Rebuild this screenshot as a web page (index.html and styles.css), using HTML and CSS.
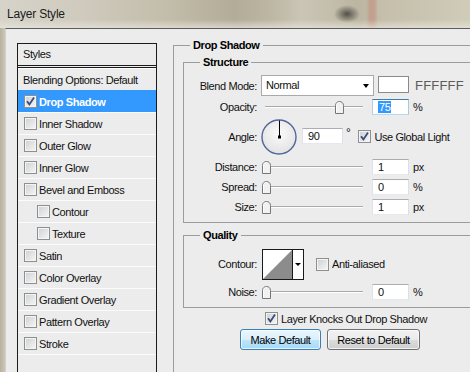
FILE: index.html
```html
<!DOCTYPE html>
<html>
<head>
<meta charset="utf-8">
<title>Layer Style</title>
<link rel="stylesheet" href="styles.css">
</head>
<body>
<div class="window">
  <div class="titlebar"><span class="title">Layer Style</span></div>
  <div class="frame">
    <div class="frame-edge"></div>
    <div class="client">
      <div class="styles-panel">
        <div class="styles-head">Styles</div>
        <ul class="style-list">
          <li class="style-item plain">Blending Options: Default</li>
          <li class="style-item selected"><span class="cb"><svg width="11" height="11" viewBox="0 0 11 11"><path d="M2 5.2L4.4 8.4L9 1.6" fill="none" stroke="#3b4c7a" stroke-width="1.8"/></svg></span>Drop Shadow</li>
          <li class="style-item"><span class="cb"></span>Inner Shadow</li>
          <li class="style-item"><span class="cb"></span>Outer Glow</li>
          <li class="style-item"><span class="cb"></span>Inner Glow</li>
          <li class="style-item"><span class="cb"></span>Bevel and Emboss</li>
          <li class="style-item sub"><span class="cb"></span>Contour</li>
          <li class="style-item sub"><span class="cb"></span>Texture</li>
          <li class="style-item"><span class="cb"></span>Satin</li>
          <li class="style-item"><span class="cb"></span>Color Overlay</li>
          <li class="style-item"><span class="cb"></span>Gradient Overlay</li>
          <li class="style-item"><span class="cb"></span>Pattern Overlay</li>
          <li class="style-item"><span class="cb"></span>Stroke</li>
        </ul>
      </div>

      <fieldset class="group outer">
        <legend>Drop Shadow</legend>

        <fieldset class="group inner structure">
          <legend>Structure</legend>

          <div class="row row-blend">
            <span class="label">Blend Mode:</span>
            <span class="select">Normal<span class="sel-arrow"></span></span>
            <span class="swatch"></span>
            <span class="hex">FFFFFF</span>
          </div>

          <div class="row row-slider row-opacity">
            <span class="label">Opacity:</span>
            <span class="slider"><span class="track"></span><span class="thumb" style="left: calc(75% - 4px)"><svg width="9" height="13" viewBox="0 0 9 13"><path d="M0.5 12.5V4.5C0.5 2 2.3 0.5 4.5 0.5S8.5 2 8.5 4.5V12.5Z" fill="#f1f1f1" stroke="#777"/><path d="M1.5 11.5V4.6C1.5 2.8 2.8 1.5 4.5 1.5" fill="none" stroke="#fff"/></svg></span></span>
            <span class="field focused"><span class="hl">75</span></span>
            <span class="unit">%</span>
          </div>

          <div class="row row-angle">
            <span class="label">Angle:</span>
            <span class="dial"><svg width="36" height="36" viewBox="0 0 36 36"><defs><radialGradient id="dialfill" cx="50%" cy="40%" r="60%"><stop offset="0" stop-color="#fbfbfb"/><stop offset="1" stop-color="#e2e2e2"/></radialGradient></defs><circle cx="18" cy="18" r="17" fill="url(#dialfill)" stroke="#51679a" stroke-width="1.4"/><line x1="18.5" y1="1.5" x2="18.5" y2="18" stroke="#000" stroke-width="1"/><rect x="17" y="16.5" width="3" height="3" fill="#000"/></svg></span>
            <span class="field angle-field">90</span>
            <span class="deg">°</span>
            <span class="cb angle-cb"><svg width="11" height="11" viewBox="0 0 11 11"><path d="M2 5.2L4.4 8.4L9 1.6" fill="none" stroke="#3b4c7a" stroke-width="1.8"/></svg></span>
            <span class="cb-text">Use Global Light</span>
          </div>

          <div class="row row-slider">
            <span class="label">Distance:</span>
            <span class="slider"><span class="track"></span><span class="thumb" style="left: calc(0% - 3px)"><svg width="9" height="13" viewBox="0 0 9 13"><path d="M0.5 12.5V4.5C0.5 2 2.3 0.5 4.5 0.5S8.5 2 8.5 4.5V12.5Z" fill="#f1f1f1" stroke="#777"/><path d="M1.5 11.5V4.6C1.5 2.8 2.8 1.5 4.5 1.5" fill="none" stroke="#fff"/></svg></span></span>
            <span class="field">1</span>
            <span class="unit">px</span>
          </div>

          <div class="row row-slider">
            <span class="label">Spread:</span>
            <span class="slider"><span class="track"></span><span class="thumb" style="left: calc(0% - 3px)"><svg width="9" height="13" viewBox="0 0 9 13"><path d="M0.5 12.5V4.5C0.5 2 2.3 0.5 4.5 0.5S8.5 2 8.5 4.5V12.5Z" fill="#f1f1f1" stroke="#777"/><path d="M1.5 11.5V4.6C1.5 2.8 2.8 1.5 4.5 1.5" fill="none" stroke="#fff"/></svg></span></span>
            <span class="field">0</span>
            <span class="unit">%</span>
          </div>

          <div class="row row-slider">
            <span class="label">Size:</span>
            <span class="slider"><span class="track"></span><span class="thumb" style="left: calc(0% - 3px)"><svg width="9" height="13" viewBox="0 0 9 13"><path d="M0.5 12.5V4.5C0.5 2 2.3 0.5 4.5 0.5S8.5 2 8.5 4.5V12.5Z" fill="#f1f1f1" stroke="#777"/><path d="M1.5 11.5V4.6C1.5 2.8 2.8 1.5 4.5 1.5" fill="none" stroke="#fff"/></svg></span></span>
            <span class="field">1</span>
            <span class="unit">px</span>
          </div>
        </fieldset>

        <fieldset class="group inner quality">
          <legend>Quality</legend>

          <div class="row row-contour">
            <span class="label">Contour:</span>
            <span class="contour">
              <svg class="contour-preview" width="29" height="29" viewBox="0 0 29 29"><rect width="29" height="29" fill="#fff"/><polygon points="0,29 29,0 29,29" fill="#8c8c8c"/></svg>
              <span class="contour-drop"><span class="tri"></span></span>
            </span>
            <span class="cb anti-cb"></span>
            <span class="cb-text">Anti-aliased</span>
          </div>

          <div class="row row-slider row-noise">
            <span class="label">Noise:</span>
            <span class="slider"><span class="track"></span><span class="thumb" style="left: calc(0% - 3px)"><svg width="9" height="13" viewBox="0 0 9 13"><path d="M0.5 12.5V4.5C0.5 2 2.3 0.5 4.5 0.5S8.5 2 8.5 4.5V12.5Z" fill="#f1f1f1" stroke="#777"/><path d="M1.5 11.5V4.6C1.5 2.8 2.8 1.5 4.5 1.5" fill="none" stroke="#fff"/></svg></span></span>
            <span class="field">0</span>
            <span class="unit">%</span>
          </div>
        </fieldset>

        <div class="knock">
          <span class="cb"><svg width="11" height="11" viewBox="0 0 11 11"><path d="M2 5.2L4.4 8.4L9 1.6" fill="none" stroke="#3b4c7a" stroke-width="1.8"/></svg></span>
          <span class="cb-text">Layer Knocks Out Drop Shadow</span>
        </div>

        <div class="buttons">
          <button class="btn btn-default" type="button">Make Default</button>
          <button class="btn" type="button">Reset to Default</button>
        </div>
      </fieldset>
    </div>
  </div>
</div>
</body>
</html>
```

FILE: styles.css
```css
* { box-sizing: border-box; }

html, body {
  margin: 0;
  padding: 0;
}

body {
  width: 470px;
  height: 372px;
  overflow: hidden;
  background: #ececec;
  font-family: "Liberation Sans", Arial, sans-serif;
  font-size: 11px;
  letter-spacing: -0.4px;
  color: #111;
}

.window {
  display: flex;
  flex-direction: column;
  height: 372px;
}

/* ---------- title bar ---------- */
.titlebar {
  height: 28px;
  flex: none;
  display: flex;
  align-items: center;
  padding-left: 7px;
  background:
    linear-gradient(to bottom, rgba(255,255,255,0) 70%, rgba(232,229,220,0.7) 100%),
    radial-gradient(ellipse 13px 9px at 347px 14px, rgba(70,68,62,0.9), rgba(90,88,80,0) 100%),
    linear-gradient(90deg, rgba(0,0,0,0) 366px, rgba(196,138,124,0.55) 370px, rgba(196,138,124,0.55) 374px, rgba(0,0,0,0) 378px),
    linear-gradient(90deg, #d6d3c9 0%, #cfcabd 18%, #c3bdab 35%, #b2ac98 50%, #bdb7a4 58%, #cac5b5 64%, #c4bead 70%, #bbb5a2 76%, #c5bfac 82%, #cbc6b3 92%, #d0ccba 100%);
}

.title {
  font-size: 12px;
  letter-spacing: -0.2px;
  color: #1c1c1c;
}

/* ---------- frame ---------- */
.frame {
  flex: 1;
  display: flex;
  min-height: 0;
}

.frame-edge {
  width: 5px;
  flex: none;
  background: linear-gradient(90deg, #b7b19e, #cbc6b6);
}

.client {
  flex: 1;
  min-width: 0;
  display: flex;
  align-items: flex-start;
  gap: 16px;
  padding: 10px 0 0 11px;
  border-top: 1px solid #5c5c5c;
  border-left: 1px solid #d0d0d0;
  background: #ececec;
  overflow: hidden;
}

/* ---------- styles list ---------- */
.styles-panel {
  flex: none;
  width: 140px;
  height: 340px;
  margin-top: 4px;
  border: 1px solid #1c1c1c;
  background: #ececec;
}

.styles-head {
  height: 24px;
  line-height: 21px;
  padding-left: 5px;
  border-bottom: 3px double #1c1c1c;
}

.style-list {
  list-style: none;
  margin: 0;
  padding: 0;
  border-bottom: 1px solid #fbfbfb;
}

.style-item {
  height: 22px;
  display: flex;
  align-items: center;
  gap: 2px;
  padding-left: 6px;
  border-top: 1px solid #fbfbfb;
  white-space: nowrap;
}

.style-item.plain { padding-left: 5px; }
.style-item.sub { padding-left: 19px; }

.style-item.selected {
  background: #3399ff;
  border-top-color: #3399ff;
  color: #fff;
  font-weight: bold;
}

/* ---------- checkbox ---------- */
.cb {
  flex: none;
  width: 13px;
  height: 13px;
  border: 1px solid #8e8f8f;
  background: linear-gradient(135deg, #cdcfd3, #f7f7f7);
  box-shadow: inset 0 0 0 1px #f4f4f4;
  display: inline-flex;
}

.cb svg { display: block; }

.cb-text {
  margin-left: 3px;
  white-space: nowrap;
}

/* ---------- group boxes ---------- */
.group {
  margin: 0;
  padding: 0;
  border: 1px solid #9c9c9c;
  min-inline-size: 0;
}

.group > legend {
  margin-left: 16px;
  padding: 0 3px;
  font-weight: bold;
  line-height: 13px;
  color: #000;
}

.outer {
  flex: none;
  width: 330px;
  min-height: 345px;
}

.inner {
  width: 320px;
  margin: 4px 0 0 9px;
  padding: 6px 0 7px 0;
}

.quality {
  margin-top: 6px;
  padding-top: 7px;
}

/* ---------- rows ---------- */
.row {
  display: flex;
  align-items: center;
  white-space: nowrap;
}

.label {
  flex: none;
  width: 73px;
  text-align: right;
}

.row-blend { height: 21px; }
.row-slider { height: 16px; margin-top: 4px; }
.row-opacity { margin-top: 3px; }
.row-angle { height: 36px; margin-top: 4px; align-items: flex-start; }
.row-angle .label { align-self: center; }
.row-contour { height: 30px; }
.row-noise { margin-top: 5px; }

.select {
  position: relative;
  flex: none;
  width: 113px;
  height: 21px;
  margin-left: 4px;
  padding-left: 4px;
  line-height: 19px;
  background: #fff;
  border: 1px solid #a9a9a9;
}

.sel-arrow {
  position: absolute;
  right: 4px;
  top: 8px;
  width: 0;
  height: 0;
  border-left: 3.5px solid transparent;
  border-right: 3.5px solid transparent;
  border-top: 4px solid #000;
}

.swatch {
  flex: none;
  width: 31px;
  height: 17px;
  margin-left: 4px;
  margin-top: -3px;
  background: #fff;
  border: 1px solid #8a8a8a;
}

.hex {
  margin-left: 6px;
  font-size: 13px;
  letter-spacing: 0.2px;
  color: #5a5a5a;
}

.slider {
  position: relative;
  flex: none;
  width: 98px;
  height: 16px;
  margin-left: 8px;
  display: flex;
  align-items: center;
}

.track {
  flex: 1;
  height: 2px;
  border-top: 1px solid #a9a9a9;
  background: #fff;
}

.thumb {
  position: absolute;
  top: 2px;
  width: 9px;
  height: 13px;
}

.thumb svg { display: block; }

.field {
  flex: none;
  width: 37px;
  height: 16px;
  margin-left: 9px;
  padding-left: 5px;
  line-height: 14px;
  background: #fff;
  border: 1px solid;
  border-color: #abadb3 #dbdfe6 #e3e9ef #e2e3ea;
}

.field.focused {
  border-color: #3d7bad #a4c9e3 #b7d9ed #b5cfe7;
}

.hl {
  background: #3399ff;
  color: #fff;
  padding: 0 1px;
}

.unit { margin-left: 4px; }

.dial {
  flex: none;
  width: 36px;
  height: 36px;
  margin-left: 4px;
}

.dial svg { display: block; }

.angle-field {
  width: 41px;
  margin-left: 5px;
  margin-top: 9px;
}

.deg {
  margin-left: 3px;
  margin-top: 9px;
  font-size: 12px;
  line-height: 11px;
}

.angle-cb {
  margin-left: 8px;
  margin-top: 11px;
}

.row-angle .cb-text { align-self: center; }

.contour {
  flex: none;
  display: flex;
  width: 42px;
  height: 31px;
  margin-left: 5px;
  border: 1px solid #1a1a1a;
  background: #fff;
}

.contour-preview { display: block; flex: none; }

.contour-drop {
  flex: 1;
  border-left: 1px solid #1a1a1a;
  display: flex;
  align-items: center;
  justify-content: center;
}

.tri {
  width: 0;
  height: 0;
  border-left: 3px solid transparent;
  border-right: 3px solid transparent;
  border-top: 3px solid #000;
}

.anti-cb { margin-left: 12px; }

/* ---------- bottom ---------- */
.knock {
  display: flex;
  align-items: center;
  height: 13px;
  margin-top: 4px;
  padding-left: 91px;
  white-space: nowrap;
}

.buttons {
  display: flex;
  gap: 6px;
  margin-top: 4px;
  padding-left: 66px;
}

.btn {
  flex: none;
  height: 21px;
  width: 93px;
  padding: 0;
  font-family: inherit;
  font-size: 11px;
  letter-spacing: -0.4px;
  color: #000;
  border: 1px solid #707070;
  border-radius: 3px;
  background: linear-gradient(#f2f2f2 0%, #ebebeb 50%, #dddddd 50%, #cfcfcf 100%);
  box-shadow: inset 0 0 0 1px rgba(255,255,255,0.7);
}

.btn-default {
  width: 81px;
  border-color: #3c7fb1;
  background: linear-gradient(#eaf6fd 0%, #d9f0fc 50%, #bee6fd 50%, #a7d9f5 100%);
}
```
